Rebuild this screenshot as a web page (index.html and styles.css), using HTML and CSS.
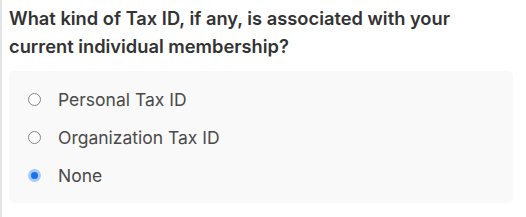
FILE: index.html
```html
<!DOCTYPE html>
<html lang="en">

<head>
    <meta charset="UTF-8">
    <meta name="viewport" content="width=device-width,initial-scale=1.0">
    <title>Tax ID</title>
    <link rel="stylesheet" href="styles.css">
</head>

<body>
    <section class="question">
        <h2 class="prompt">What kind of Tax ID, if any, is associated with your current individual membership?</h2>
        <div class="choices">
            <label class="choice">
                <input type="radio" name="taxid" value="personal">
                <span>Personal Tax ID</span>
            </label>
            <label class="choice">
                <input type="radio" name="taxid" value="organization">
                <span>Organization Tax ID</span>
            </label>
            <label class="choice">
                <input type="radio" name="taxid" value="none" checked>
                <span>None</span>
            </label>
        </div>
    </section>
</body>

</html>
```

FILE: styles.css
```css
* {
    padding: 0;
    margin: 0;
    box-sizing: border-box;
    font-family: Inter, "Liberation Sans", Arial, sans-serif;
}

body {
    background: #fff;
}

/* question card with thin rule on the left */
.question {
    height: 217px;
    border-left: 2px solid #e4e4e4;
    padding: 4px 13px 0 7px;
}

.prompt {
    max-width: 470px;
    font-size: 18.3px;
    font-weight: 600;
    line-height: 28px;
    color: #333;
}

/* grey panel holding the options */
.choices {
    margin-top: 11px;
    background: #f9f9f9;
    border-radius: 5px;
    padding: 16px 0 16px 19px;
    display: flex;
    flex-direction: column;
    gap: 14px;
}

.choice {
    display: flex;
    align-items: center;
    gap: 17px;
    height: 24px;
    font-size: 17.5px;
    color: #4a4a4a;
}

.choice input {
    appearance: none;
    -webkit-appearance: none;
    width: 13px;
    height: 13px;
    border: 1px solid #858585;
    border-radius: 50%;
    background: #fff;
}

.choice input:checked {
    border: 3px solid #a9cbf9;
    background: #1a73e8;
}
```
